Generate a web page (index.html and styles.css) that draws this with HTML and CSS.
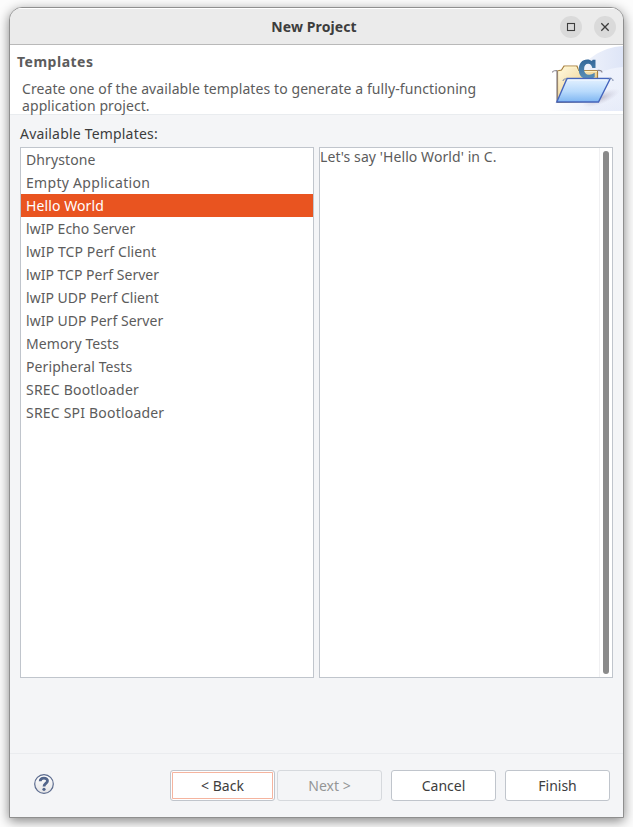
FILE: index.html
```html
<!DOCTYPE html>
<html lang="en">
<head>
<meta charset="utf-8">
<title>New Project</title>
<link rel="stylesheet" href="styles.css">
</head>
<body>
<main class="window">
  <header class="titlebar">
    <h1 class="title">New Project</h1>
    <div class="controls">
      <button class="control" aria-label="Maximize"><svg width="22" height="22" viewBox="0 0 22 22"><rect x="7.5" y="7.5" width="7" height="7" fill="none" stroke="#3d3d3d" stroke-width="1.1"/></svg></button>
      <button class="control" aria-label="Close"><svg width="22" height="22" viewBox="0 0 22 22"><path d="M7.3 7.3l7.4 7.4M14.7 7.3l-7.4 7.4" stroke="#3d3d3d" stroke-width="1.3"/></svg></button>
    </div>
  </header>
  <section class="banner">
    <div class="banner-text">
      <h2 class="heading">Templates</h2>
      <p class="description">Create one of the available templates to generate a fully-functioning<br>application project.</p>
    </div>
    <svg class="wizard" width="75" height="66" viewBox="0 0 75 66">
      <defs>
        <linearGradient id="sky" x1="0" x2="1" y1="0" y2="0"><stop offset="0" stop-color="#fff"/><stop offset="1" stop-color="#dee5f7"/></linearGradient>
        <linearGradient id="glow" x1="0" x2="1" y1="1" y2="0"><stop offset=".3" stop-color="#fff" stop-opacity="0"/><stop offset="1" stop-color="#edf1fc"/></linearGradient>
        <linearGradient id="paper" x1="0" x2="1" y1="0" y2="1"><stop offset="0" stop-color="#fffbe4"/><stop offset="1" stop-color="#e9bd65"/></linearGradient>
        <linearGradient id="front" x1="0" x2="0" y1="0" y2="1"><stop offset="0" stop-color="#e5f2ff"/><stop offset=".55" stop-color="#b8dafc"/><stop offset="1" stop-color="#7fb6f2"/></linearGradient>
        <linearGradient id="letter" x1="0" x2="0" y1="0" y2="1"><stop offset="0" stop-color="#326698"/><stop offset="1" stop-color="#5b91b8"/></linearGradient>
        <radialGradient id="shadow"><stop offset="0" stop-color="#7d7488" stop-opacity=".4"/><stop offset="1" stop-color="#aaa3bd" stop-opacity="0"/></radialGradient>
      </defs>
      <path d="M0 66C20 52 28 4 75 1v65z" fill="url(#sky)"/>
      <path d="M17 66C37 53 36 24 75 22v44z" fill="url(#glow)"/>
      <ellipse cx="53" cy="53" rx="20" ry="6" transform="rotate(-22 53 53)" fill="url(#shadow)"/>
      <path d="M9.5 57.5V26l4-1 2.5-4H29l1.5 4.5H49.500v31z" fill="url(#paper)" stroke="#a8803f" stroke-width="1.2"/>
      <path d="M10.500 26.600h4L17 22.200h11l2 4.200H49" fill="none" stroke="#fff4c8"/>
      <path d="M4.500 27.500c0-2 2-2 4.500-2M9 26v31M49 25.500c3-.2 5 0 5 2" fill="none" stroke="#8b8791" stroke-width="1.2"/>
      <path d="M47.500 14.800V23h-3.200c-.8-2.800-2-4.200-4-4.200-2.800 0-4.200 2-4.200 5.400 0 3.600 1.800 5.500 5 5.500 2 0 3.700-.6 5.600-1.900v4.200c-2.100 1.500-4.300 2-7 2-5.700 0-9-3.500-9-9.400 0-6.200 3.400-10.200 8.500-10.200 2 0 3.400.5 4.700 1.600l.8-1.200z" fill="url(#letter)"/>
      <path d="M19 33.500h43.300L50.500 57H8.800z" fill="url(#front)" stroke="#4565bd" stroke-width="1.4"/>
      <path d="M20 35h39.500" stroke="#f5faff"/>
      <path d="M15 36c0-2 2-2 4-2.300M61 33.500c3-.2 4 .2 4 2.500" fill="none" stroke="#7988a8"/>
    </svg>
  </section>
  <section class="content">
    <h3 class="label">Available Templates:</h3>
    <div class="panes">
      <ul class="list">
        <li>Dhrystone</li>
        <li>Empty Application</li>
        <li class="selected">Hello World</li>
        <li>lwIP Echo Server</li>
        <li>lwIP TCP Perf Client</li>
        <li>lwIP TCP Perf Server</li>
        <li>lwIP UDP Perf Client</li>
        <li>lwIP UDP Perf Server</li>
        <li>Memory Tests</li>
        <li>Peripheral Tests</li>
        <li>SREC Bootloader</li>
        <li>SREC SPI Bootloader</li>
      </ul>
      <div class="detail">
        <p>Let's say 'Hello World' in C.</p>
        <div class="scroll"><div class="thumb"></div></div>
      </div>
    </div>
  </section>
  <footer class="footer">
    <svg class="help" width="20" height="20" viewBox="0 0 20 20">
      <defs><linearGradient id="disc" x1="0" x2="0" y1="0" y2="1"><stop offset="0" stop-color="#fff"/><stop offset="1" stop-color="#e4e4e6"/></linearGradient></defs>
      <circle cx="10" cy="10" r="9.3" fill="url(#disc)" stroke="#5b6b8e" stroke-width="1.2"/>
      <path d="M6.2 7.2C6.3 2.9 13.7 3.1 13.5 7c-.1 2.3-3.5 2.6-3.5 5.4" fill="none" stroke="#52658b" stroke-width="2.8"/>
      <circle cx="10" cy="15.3" r="1.6" fill="#52658b"/>
    </svg>
    <button class="btn back">&lt; Back</button>
    <button class="btn next" disabled>Next &gt;</button>
    <button class="btn cancel">Cancel</button>
    <button class="btn finish">Finish</button>
  </footer>
</main>
</body>
</html>
```
FILE: styles.css
```css
* { box-sizing: border-box; }
body {
  margin: 0;
  height: 827px;
  padding: 7px 9px 9px;
  overflow: hidden;
  background: #fcfcfc;
  font-family: "Noto Sans", sans-serif;
  font-size: 14px;
  color: #5c5c5c;
}
h1, h2, h3, p, ul { margin: 0; padding: 0; }
button { font: inherit; padding: 0; }
.window {
  width: 615px;
  height: 811px;
  display: flex;
  flex-direction: column;
  overflow: hidden;
  border: 1px solid #8f8f8f;
  border-radius: 13px 13px 0 0;
  background: #f4f5f7;
  box-shadow: 0 3px 12px rgba(0, 0, 0, .48);
}
.titlebar {
  height: 37px;
  flex: none;
  display: grid;
  grid-template-columns: 1fr auto 1fr;
  align-items: center;
  padding-right: 7px;
  background: #ebebeb;
  border-top: 1px solid #fff;
  border-bottom: 1px solid #b9b9b9;
}
.title {
  grid-column: 2;
  margin-left: 2px;
  font-size: 14px;
  line-height: 20px;
  font-weight: 700;
  letter-spacing: .1px;
  color: #3d3d3d;
}
.controls { display: flex; gap: 12px; justify-content: flex-end; }
.control {
  width: 22px;
  height: 22px;
  border: 0;
  border-radius: 50%;
  background: #dadada;
}
.control svg { display: block; }
.banner {
  height: 70px;
  flex: none;
  display: flex;
  justify-content: space-between;
  background: #fff;
  border-bottom: 1px solid #e9ecef;
}
.banner-text { padding: 7px 0 0 7px; white-space: nowrap; }
.heading { font-size: 14px; line-height: 20px; font-weight: 700; letter-spacing: .5px; }
.description { margin: 8px 0 0 5px; line-height: 17px; letter-spacing: .09px; }
.wizard { flex: none; }
.content { height: 638px; flex: none; padding: 9px 10px 0; }
.label {
  height: 23px;
  font-size: 14px;
  font-weight: 400;
  line-height: 20px;
  letter-spacing: .19px;
  color: #3d3d3d;
}
.panes { display: flex; gap: 5px; height: 531px; }
.list, .detail { width: 294px; border: 1px solid #c0c5cc; background: #fff; }
.list { list-style: none; }
.list li { height: 23px; padding-left: 5px; line-height: 23px; letter-spacing: .1px; }
.list li:nth-child(2) { letter-spacing: .3px; }
.list li:nth-child(n+6):nth-child(-n+8), .list li:nth-child(4) { letter-spacing: .02px; }
.list li:nth-child(n+11) { letter-spacing: .2px; }
.list .selected { background: #e95420; color: #fff; }
.detail { display: flex; justify-content: space-between; }
.detail p { line-height: 18px; letter-spacing: .08px; }
.scroll { width: 13px; padding: 3px; border-left: 1px solid #f0f0f2; }
.thumb { width: 6px; height: 523px; border-radius: 3px; background: #8a8a8a; }
.footer {
  flex: 1;
  display: flex;
  align-items: flex-start;
  padding: 16px 13px 0 24px;
  border-top: 1px solid #eaecef;
}
.help { margin: 4px 116px 0 0; }
.btn {
  width: 105px;
  height: 31px;
  border: 1px solid #c0c5cc;
  border-radius: 3px;
  background: #fff;
  color: #3d3d3d;
}
.back { margin-right: 2px; box-shadow: inset 0 0 0 1px #fff, inset 0 0 0 2px #f5b49f; }
.next { margin-right: 9px; border-color: #d6d9dd; background: #f4f5f7; color: #949596; }
.cancel { margin-right: 9px; }
```
